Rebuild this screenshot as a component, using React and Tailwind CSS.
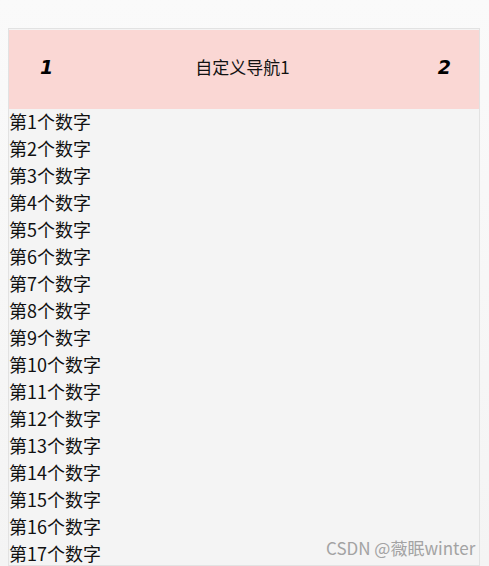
const rows = Array.from({ length: 17 }, (_, i) => `第${i + 1}个数字`);

export default function App() {
  return (
    <div
      className="relative h-[566px] overflow-hidden bg-gradient-to-b from-[#fafafa] to-[#f4f4f4] pt-[28px] pl-[8px] pr-[9px]"
      style={{ fontFamily: '"Noto Sans CJK SC", "Noto Sans", sans-serif' }}
    >
      <div className="h-full border border-[#e2e2e2] bg-[#f4f4f4] pt-px">
        <div className="h-[79px] bg-[#fad7d4] grid grid-cols-[1fr_auto_1fr] items-start pt-[25px] pl-[31px] pr-[28px]">
          <span className="text-[19px] leading-[24px] font-black italic text-black" style={{ fontFamily: '"DejaVu Sans", sans-serif' }}>
            1
          </span>
          <span className="text-[17px] leading-[24px] text-[#111] -translate-x-[3px]">自定义导航1</span>
          <span className="justify-self-end text-[19px] leading-[24px] font-black italic text-black" style={{ fontFamily: '"DejaVu Sans", sans-serif' }}>
            2
          </span>
        </div>
        <ul className="-mt-px">
          {rows.map((r) => (
            <li key={r} className="text-[18px] leading-[27px] text-[#111]">
              {r}
            </li>
          ))}
        </ul>
      </div>
      <div className="absolute left-[326px] top-[537px] text-[17px] leading-[22px] text-[#a3a3a3]">
        CSDN @薇眠winter
      </div>
    </div>
  );
}
